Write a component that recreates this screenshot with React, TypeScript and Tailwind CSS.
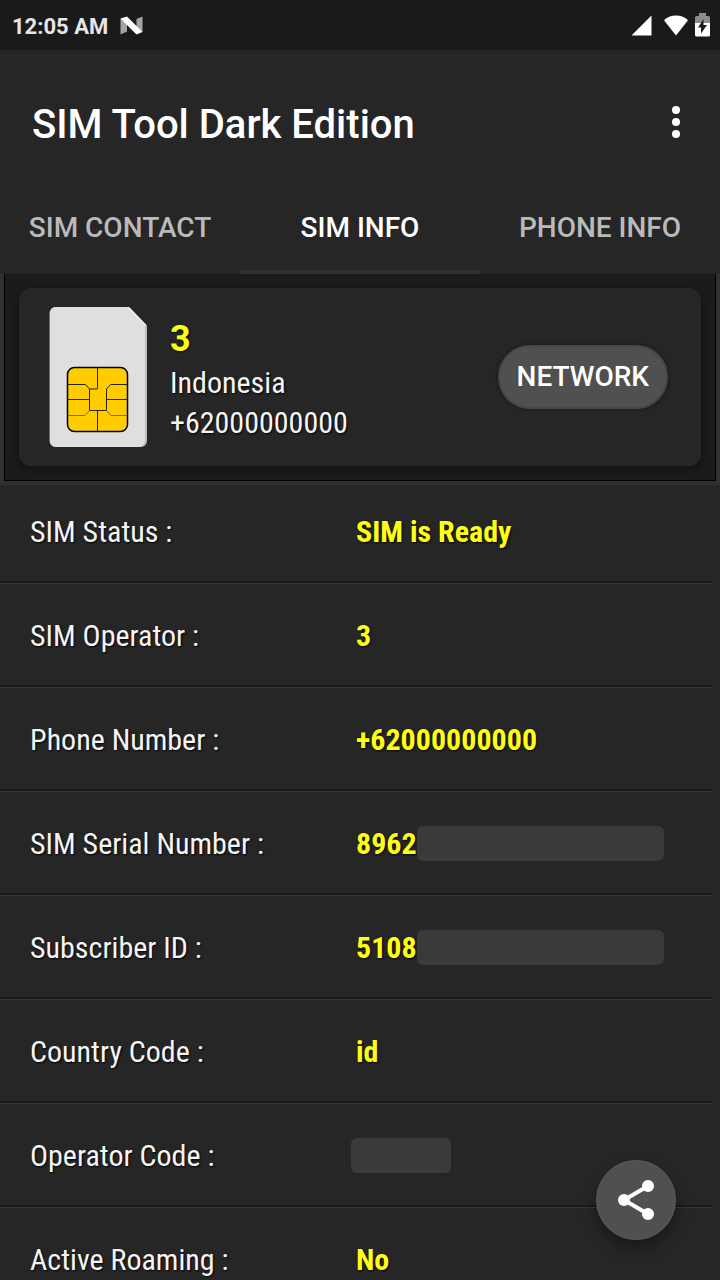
import type { ReactNode } from "react";

type InfoItem = {
  label: string;
  value?: string;
  hidden?: "long" | "short";
};

const tabs = ["SIM CONTACT", "SIM INFO", "PHONE INFO"];

const simInfo: InfoItem[] = [
  { label: "SIM Status :", value: "SIM is Ready" },
  { label: "SIM Operator :", value: "3" },
  { label: "Phone Number :", value: "+62000000000" },
  { label: "SIM Serial Number :", value: "8962", hidden: "long" },
  { label: "Subscriber ID :", value: "5108", hidden: "long" },
  { label: "Country Code :", value: "id" },
  { label: "Operator Code :", hidden: "short" },
  { label: "Active Roaming :", value: "No" },
];

// 1. Status Bar
const StatusBar = () => (
  <div className="flex h-[50px] shrink-0 items-center justify-between bg-[#1a1a1a] pl-3 pr-[10px]">
    <div className="flex items-center gap-3">
      <span className="pt-1 text-[22px] leading-7 font-bold text-[#e6e6e6]">12:05 AM</span>
      <svg width="23" height="19" viewBox="0 0 23 19" aria-hidden="true">
        <path d="M0.5 2.500v16l6.500-3V7zM22.500 0.500v15.500l-6-3V3z" fill="#a3a3a3" />
        <path d="M0.500 2.500L7 0.500l15.500 15.500-6 2.500z" fill="#fff" />
      </svg>
    </div>
    <div className="flex items-center gap-3">
      <svg width="21" height="21" viewBox="0 0 21 21" aria-hidden="true">
        <path d="M20.500 0.500v20H0.500z" fill="#fff" />
      </svg>
      <svg width="24" height="21" viewBox="0 0 24 21" aria-hidden="true">
        <path d="M12 20.500L0 5.200C3 2.200 7 0.500 12 0.500s9 1.700 12 4.700z" fill="#fff" />
      </svg>
      <svg width="15" height="24" viewBox="0 0 15 24" className="-ml-[5px]" aria-hidden="true">
        <path d="M4 0h7v3h2.500a1.500 1.500 0 0 1 1.500 1.500V10H0V4.500A1.500 1.500 0 0 1 1.500 3H4z" fill="#8c8c8c" />
        <path d="M0 10h15v12a1.500 1.500 0 0 1-1.500 1.500h-12A1.500 1.500 0 0 1 0 22z" fill="#fff" />
        <path d="M8.500 6v6H12L6 20.500v-6H3z" fill="#1a1a1a" />
      </svg>
    </div>
  </div>
);

// 2. App Bar
const AppBar = () => (
  <header className="flex h-32 shrink-0 items-center justify-between pt-5 pl-8 pr-6">
    <h1 className="pt-[2px] text-[40px] leading-12 font-medium text-white">SIM Tool Dark Edition</h1>
    <button type="button" aria-label="More options" className="flex h-12 w-10 items-center justify-center pb-1">
      <svg width="8" height="32" viewBox="0 0 8 32" fill="#fff" aria-hidden="true">
        <circle cx="4" cy="4" r="4" />
        <circle cx="4" cy="16" r="4" />
        <circle cx="4" cy="28" r="4" />
      </svg>
    </button>
  </header>
);

// 3. Tab Bar
const TabBar = ({ active }: { active: string }) => (
  <div role="tablist" className="grid h-24 shrink-0 grid-cols-3">
    {tabs.map((tab) => (
      <button
        key={tab}
        type="button"
        role="tab"
        aria-selected={tab === active}
        className={
          tab === active
            ? "border-b-4 border-[#303030] pt-2 text-[28px] leading-8 font-medium text-white"
            : "border-b-4 border-transparent pt-2 text-[28px] leading-8 font-medium text-[#bababa]"
        }
      >
        {tab}
      </button>
    ))}
  </div>
);

// 4. SIM Card Drawing
const SimIcon = () => (
  <svg width="98" height="140" viewBox="0 0 98 140" className="shrink-0" aria-hidden="true">
    <path d="M6.500 0H80l18 19v115a6 6 0 0 1-6 6H6.500a6 6 0 0 1-6-6V6a6 6 0 0 1 6-6z" fill="#bdbdbd" />
    <path d="M7 0h72.500L96 18v115a7 7 0 0 1-6 7H7a6 6 0 0 1-6-6V6a6 6 0 0 1 6-6z" fill="#dfdfdf" />
    <path d="M79.500 0.500L97 18.500" stroke="#f4f4f4" strokeWidth="1.500" />
    <rect x="18.500" y="60.500" width="60" height="64" rx="7" fill="#fc0" stroke="#000" strokeWidth="1.500" />
    <path
      d="M48.500 60v22h-8M19 77.500h17.500l4 4.500v21.500h17V82l4-4.500H78M19 92.500h21.500M57.500 92.500H78M48.500 103.500V124"
      fill="none"
      stroke="#2b2300"
      strokeWidth="1"
    />
    <path d="M40.500 103.500L36 108.500H19M57.500 103.500l4.500 5H78" fill="none" stroke="#8a6e00" strokeWidth="1" />
  </svg>
);

// 5. SIM Summary Card
const SimCard = () => (
  <section className="shrink-0 bg-[#303030] px-1 pb-1">
    <div className="border border-t-0 border-black bg-[#1b1b1b] p-[14px]">
      <div className="flex h-[178px] items-center rounded-xl bg-[#262626] pr-[33px] pl-[30px] shadow-[0_3px_10px_rgba(0,0,0,0.35)]">
        <SimIcon />
        <div className="ml-[23px] flex-1 pt-[3px] text-shadow-[1px_1px_2px_rgba(0,0,0,0.9)]">
          <p className="text-[36px] leading-12 font-bold text-[#ffff14]">3</p>
          <p className="font-['Roboto_Condensed',Roboto,sans-serif] text-[30px] leading-10 text-[#f5f5f5]">Indonesia</p>
          <p className="font-['Roboto_Condensed',Roboto,sans-serif] text-[30px] leading-10 text-[#f5f5f5]">+62000000000</p>
        </div>
        <button
          type="button"
          className="mb-px h-16 rounded-full border-2 border-[#474747] bg-[#505050] px-[17px] pt-px text-[28px] leading-8 font-medium text-white shadow-[0_0_4px_rgba(0,0,0,0.4)]"
        >
          NETWORK
        </button>
      </div>
    </div>
  </section>
);

// 6. Info List
const Value = ({ children }: { children: ReactNode }) => (
  <dd className="flex h-9 flex-1 items-center font-bold text-[#ffff14]">{children}</dd>
);

const InfoRow = ({ item }: { item: InfoItem }) => (
  <div className="mr-2 flex h-[104px] shrink-0 items-center border-b border-[#363636] pl-[30px] shadow-[inset_0_-2px_0_#1a1a1a] first:h-[99px] first:pb-1">
    <dt className="w-[326px] text-[#f5f5f5]">{item.label}</dt>
    <Value>
      {item.value}
      {item.hidden === "long" && <span className="h-[35px] w-[247px] rounded-md bg-[#3a3a3a]" />}
      {item.hidden === "short" && <span className="-ml-[5px] h-[35px] w-[100px] rounded-md bg-[#3a3a3a]" />}
    </Value>
  </div>
);

const InfoList = ({ items }: { items: InfoItem[] }) => (
  <dl className="flex min-h-0 flex-1 flex-col overflow-hidden font-['Roboto_Condensed',Roboto,sans-serif] text-[30px] leading-9 text-shadow-[1px_1px_2px_rgba(0,0,0,0.9)]">
    {items.map((item) => (
      <InfoRow key={item.label} item={item} />
    ))}
  </dl>
);

// 7. Floating Share Button
const ShareButton = () => (
  <button
    type="button"
    aria-label="Share"
    className="absolute right-11 bottom-10 flex size-20 items-center justify-center rounded-full border border-[#5c5c5c] bg-[#505050] shadow-[0_8px_16px_rgba(0,0,0,0.35)]"
  >
    <svg width="36" height="40" viewBox="0 0 36 40" fill="#fff" aria-hidden="true">
      <path d="M30 6L6 20l24 14" fill="none" stroke="#fff" strokeWidth="4" />
      <circle cx="30" cy="6" r="6" />
      <circle cx="6" cy="20" r="6" />
      <circle cx="30" cy="34" r="6" />
    </svg>
  </button>
);

export default function App() {
  return (
    <div className="relative flex h-screen flex-col overflow-hidden bg-[#262626] font-[Roboto,sans-serif]">
      <StatusBar />
      <AppBar />
      <TabBar active="SIM INFO" />
      <SimCard />
      <InfoList items={simInfo} />
      <ShareButton />
    </div>
  );
}
